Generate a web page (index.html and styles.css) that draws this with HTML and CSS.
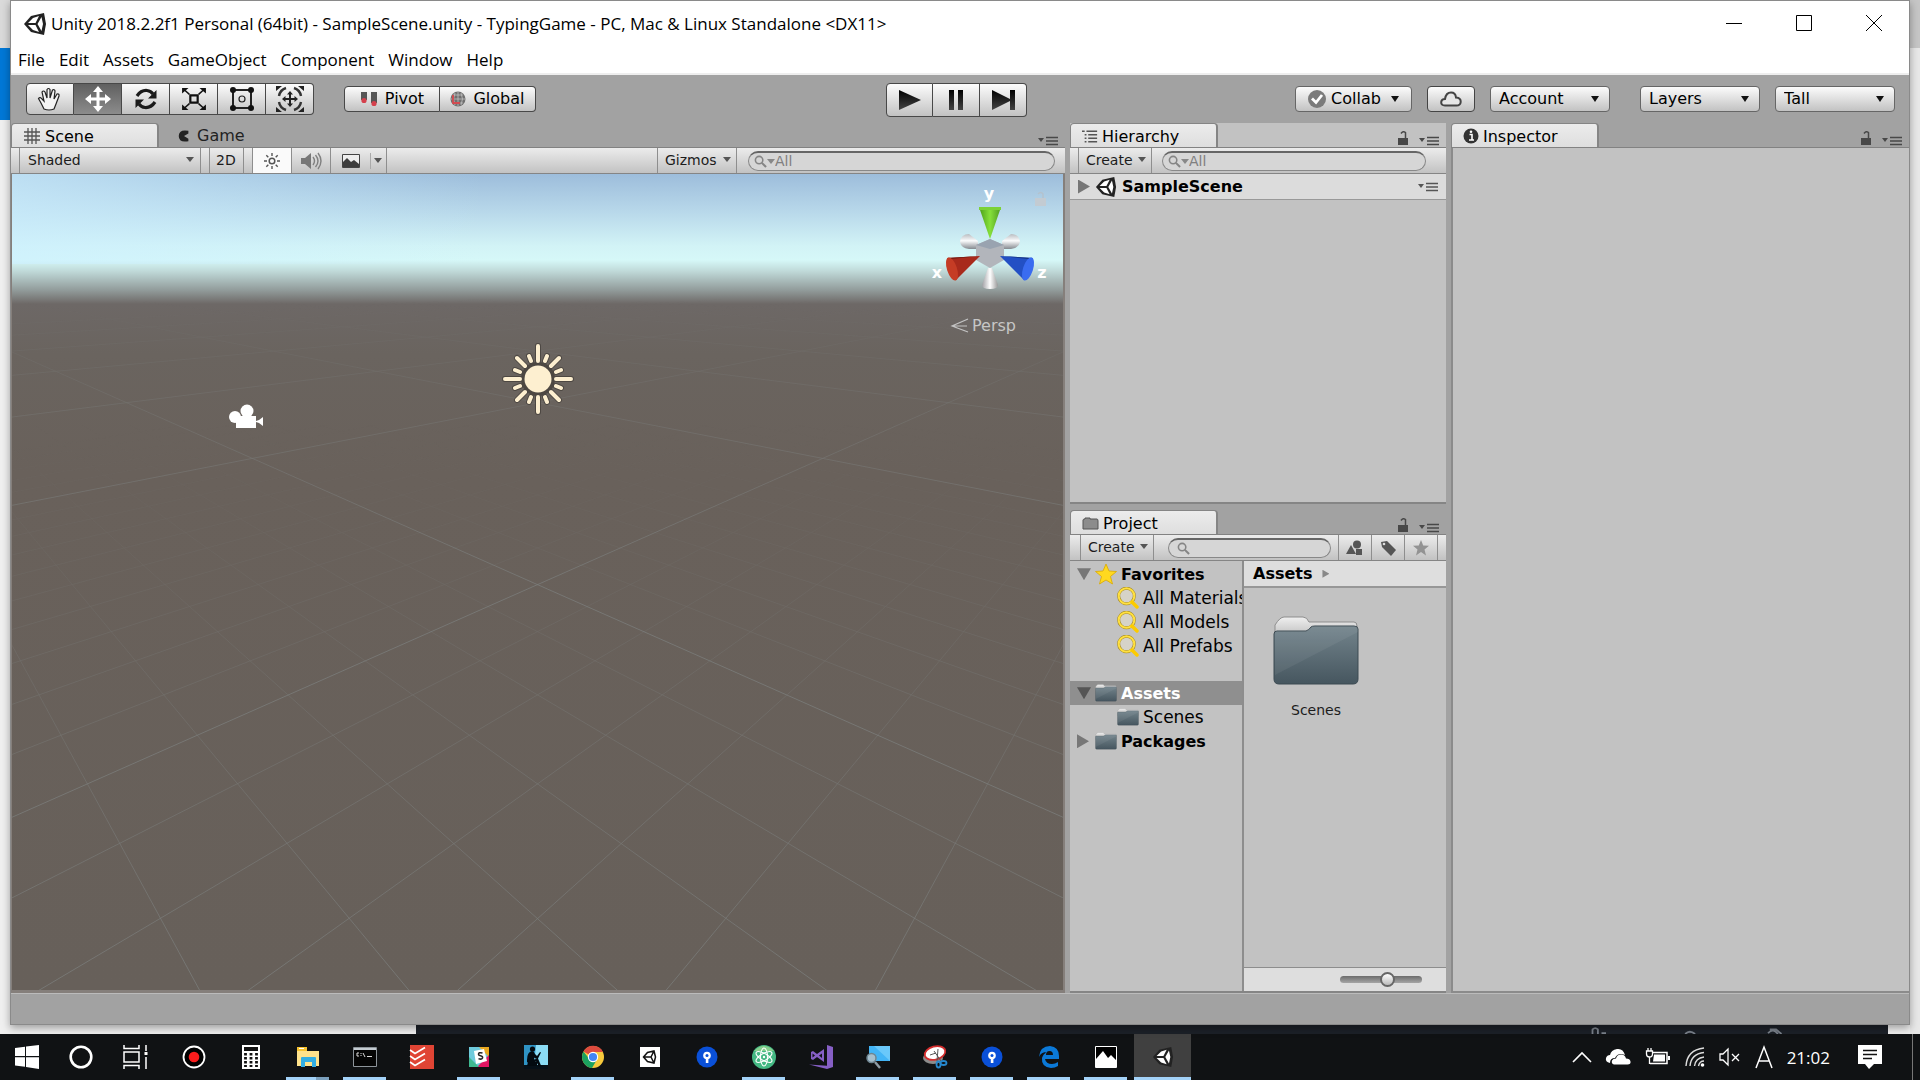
FILE: index.html
```html
<!DOCTYPE html>
<html lang="en">
<head>
<meta charset="utf-8">
<title>Unity 2018.2.2f1 Personal (64bit) - SampleScene.unity - TypingGame</title>
<link rel="stylesheet" href="styles.css">
</head>
<body>
<svg class="defs" width="0" height="0" aria-hidden="true">
  <defs>
    <linearGradient id="folder-front" x1="0" y1="0" x2="0" y2="1"><stop offset="0" stop-color="#73848c"/><stop offset="1" stop-color="#46565f"/></linearGradient>
    <linearGradient id="folder-back" x1="0" y1="0" x2="0" y2="1"><stop offset="0" stop-color="#f0f0f0"/><stop offset="1" stop-color="#a8a8a8"/></linearGradient>
    <linearGradient id="play-fill" x1="0" y1="0" x2="0" y2="1"><stop offset="0" stop-color="#000"/><stop offset="1" stop-color="#444"/></linearGradient>
  </defs>
  <symbol id="i-unity" viewBox="0 0 24 24">
    <path d="M1 12 8 4 21 1 23 12 21 23 8 20Z" fill="#222"/>
    <path d="M5 11 10 6 16 4 12.500 11Z M5 13 12.500 13 16 20 10 18Z M18.500 5 20 12 18.500 19 14.500 12Z" fill="#fff"/>
  </symbol>
  <symbol id="i-lock" viewBox="0 0 12 16"><path d="M1 8h10v7H1z" fill="currentColor"/><path d="M4 3.500Q6 .5 8.500 2.500V8" fill="none" stroke="currentColor" stroke-width="1.500"/></symbol>
  <symbol id="i-menu" viewBox="0 0 20 10"><path d="M0 2h6l-3 4z" fill="currentColor"/><path d="M8 1.500h12M8 5h12M8 8.500h12" stroke="currentColor" stroke-width="1.400"/></symbol>
  <symbol id="i-search" viewBox="0 0 14 14"><circle cx="5.500" cy="5.500" r="4" fill="none" stroke="#858585" stroke-width="1.700"/><path d="m8.500 8.500 4.500 4.500" stroke="#858585" stroke-width="2.200"/></symbol>
  <symbol id="i-find" viewBox="0 0 22 22"><circle cx="9.500" cy="9" r="7.800" fill="#d6d3c8" stroke="#a58a22" stroke-width="3"/><circle cx="9.500" cy="9" r="7.800" fill="none" stroke="#ffe040" stroke-width="2"/><path d="m15 15 5 5" stroke="#fccb00" stroke-width="3.500" stroke-linecap="round"/></symbol>
  <symbol id="i-folder" viewBox="0 0 88 72">
    <path d="M3 20V10Q8 2 12 2H31Q35 2 37 7H82Q85 7 85 11V30H3Z" fill="url(#folder-back)" stroke="#8d8d8d"/>
    <path d="M2 19Q2 16 5 16H34Q37 15 39 12 40 11 43 11H82Q86 11 86 14V64Q86 69 81 69H7Q2 69 2 64Z" fill="url(#folder-front)" stroke="#3c4a52"/>
    <path d="M3 60 86 17V13Q86 11 82 11H43Q40 11 38 13 36 16 33 16H5Q3 16 3 19Z" fill="#fff" opacity=".06"/>
  </symbol>
  <symbol id="i-blue" viewBox="0 0 24 24"><circle cx="12" cy="12" r="10.500" fill="#0a50d8"/><circle cx="12" cy="10.500" r="3.800" fill="#fff"/><path d="M10.800 12h2.600v6h-2.600z" fill="#fff"/><circle cx="12" cy="10.500" r="1.500" fill="#0a50d8"/></symbol>
</svg>

<div class="desktop">
<main class="window">
  <header class="titlebar">
    <svg class="logo" viewBox="0 0 24 24"><use href="#i-unity"/></svg>
    <h1>Unity 2018.2.2f1 Personal (64bit) - SampleScene.unity - TypingGame - PC, Mac &amp; Linux Standalone &lt;DX11&gt;</h1>
    <div class="controls">
      <button aria-label="Minimize"><svg width="16" height="16"><path d="M0 8.500h16" stroke="#000"/></svg></button>
      <button aria-label="Maximize"><svg width="16" height="16"><path d="M.5.5h15v15H.5z" fill="none" stroke="#000"/></svg></button>
      <button aria-label="Close"><svg width="16" height="16"><path d="m0 0 16 16M16 0 0 16" stroke="#000"/></svg></button>
    </div>
  </header>
  <nav class="menubar">
    <button>File</button><button>Edit</button><button>Assets</button><button>GameObject</button><button>Component</button><button>Window</button><button>Help</button>
  </nav>

  <div class="toolbar">
    <div class="tools group">
      <button aria-label="Hand"><svg width="28" height="26" viewBox="0 0 28 26"><path d="M8 23 5 17 2.500 12.500Q4 10.500 6 13L8 15 6 6Q7.500 4 9 6L11 12V3.500Q12.500 1.500 14 3.500V12L16.500 4Q18.500 3 19 5L18 13 21 8Q23.500 7.500 23 10L20 18 18 23Q13 25 8 23Z" fill="#f4f4f4" stroke="#222" stroke-width="1.200"/></svg></button>
      <button class="on" aria-label="Move"><svg width="26" height="26" viewBox="0 0 26 26"><path d="m13 0 5 6h-3.500v5.500H20V8l6 5-6 5v-3.500h-5.500V20H18l-5 6-5-6h3.500v-5.500H6V18l-6-5 6-5v3.500h5.500V6H8z" fill="#fff"/></svg></button>
      <button aria-label="Rotate"><svg width="24" height="24" viewBox="0 0 24 24"><path d="M3 9Q7 3 13 3.500 17 4 19 7M21 15Q17 21 11 20.500 7 20 5 17" fill="none" stroke="#1b1b1b" stroke-width="3.200"/><path d="M22.500 3v8.500H14zM1.500 21v-8.500H10z" fill="#1b1b1b"/></svg></button>
      <button aria-label="Scale"><svg width="26" height="22" viewBox="0 0 26 24"><path d="M9 8h8v8H9z" fill="none" stroke="#111" stroke-width="2.400"/><path d="m8 7-5-4.500M18 7l5-4.500M8 17l-5 4.500M18 17l5 4.500" stroke="#111" stroke-width="1.600"/><path d="M0 0h7L0 6zM26 0h-7l7 6zM0 24h7l-7-6zM26 24h-7l7-6z" fill="#111"/></svg></button>
      <button aria-label="Rect"><svg width="26" height="26" viewBox="0 0 26 26"><path d="M4 4h18v18H4z" fill="none" stroke="#222" stroke-width="2"/><circle cx="13" cy="13" r="3" fill="none" stroke="#222" stroke-width="1.200"/><g fill="#111"><circle cx="4" cy="4" r="3"/><circle cx="22" cy="4" r="3"/><circle cx="4" cy="22" r="3"/><circle cx="22" cy="22" r="3"/></g></svg></button>
      <button aria-label="Transform"><svg width="30" height="28" viewBox="0 0 30 28"><path d="m15 6 3 3.500h-2v3.500h3.500v-2l3.500 3-3.500 3v-2H16v3.500h2L15 22l-3-3.500h2V15h-3.500v2L7 14l3.500-3v2H14V9.500h-2z" fill="#222"/><path d="M4 11Q5 5 11 3M19 3q6 2 7 8M26 17q-1 6-7 8M11 25q-6-2-7-8" fill="none" stroke="#333" stroke-width="2.400"/><path d="M1 1h6L1 6zM29 1h-6l6 5zM1 27h6l-6-5zM29 27h-6l6-5z" fill="#222"/></svg></button>
    </div>
    <div class="group pivots">
      <button><svg width="18" height="16" viewBox="0 0 18 16"><path d="M1 1h6v8H1zM11 1h6v11h-6z" fill="#555"/><circle cx="4" cy="9.500" r="2.600" fill="#d4404c"/><circle cx="14" cy="12.500" r="2.600" fill="#d4404c"/></svg>Pivot</button>
      <button><svg width="16" height="16" viewBox="0 0 16 16"><circle cx="8" cy="8" r="7.500" fill="#707070"/><path d="M8 1v14M1 8h14M3 4h10M3 12h10M5 2Q2 8 5 14M11 2q3 6 0 12" fill="none" stroke="#c0c0c0" stroke-width=".8"/><path d="M3 4v8h7" fill="none" stroke="#d34a50" stroke-width="1.800"/></svg>Global</button>
    </div>
    <div class="group play">
      <button aria-label="Play"><svg width="22" height="20"><path d="M0 0 22 10 0 20z" fill="url(#play-fill)"/></svg></button>
      <button aria-label="Pause"><svg width="14" height="20"><path d="M0 0h5v20H0zM9 0h5v20H9z" fill="url(#play-fill)"/></svg></button>
      <button aria-label="Step"><svg width="23" height="20"><path d="M0 0 18 9V0h5v20h-5v-9L0 20z" fill="url(#play-fill)"/></svg></button>
    </div>
    <div class="right-tools">
      <button class="pill collab"><svg width="18" height="18" viewBox="0 0 18 18"><circle cx="9" cy="9" r="9" fill="#7b7b7b"/><path d="m4 8.500 4 4L14 5" fill="none" stroke="#fff" stroke-width="2.800"/></svg>Collab<i class="caret"></i></button>
      <button class="pill cloud" aria-label="Services"><svg width="22" height="16" viewBox="0 0 22 16"><path d="M5 14.500Q1 14.500 1.200 11 1.500 8 5 8 6 1.500 11 1.500q4.500 0 5 5 5 .5 4.700 4.500-.3 3.500-4.200 3.500Z" fill="#e6e6e6" stroke="#444" stroke-width="2"/></svg></button>
      <div class="drop"><select aria-label="Account"><option>Account</option></select><i class="caret"></i></div>
      <div class="drop wide-gap"><select aria-label="Layers"><option>Layers</option></select><i class="caret"></i></div>
      <div class="drop"><select aria-label="Layout"><option>Tall</option></select><i class="caret"></i></div>
    </div>
  </div>

  <div class="panes">
    <section class="pane">
      <div class="tabs">
        <button class="tab active"><svg width="18" height="16" viewBox="0 0 18 16"><path d="M5 0v16M9 0v16M13 0v16M1 4h16M1 8h16M1 12h16" stroke="#555" stroke-width="1.300"/></svg>Scene</button>
        <button class="tab"><svg width="14" height="14" viewBox="0 0 16 14"><path d="M13 1Q2-1 2 7t11 6V10L8 7l5-3z" fill="#222"/></svg>Game</button>
        <span class="tab-tools"><svg width="20" height="10"><use href="#i-menu"/></svg></span>
      </div>
      <div class="subbar scenebar">
        <div class="cell shade"><select aria-label="Draw mode"><option>Shaded</option></select><i class="caret small"></i></div>
        <button class="cell two-d">2D</button>
        <button class="cell light" aria-label="Lighting"><svg width="16" height="16" viewBox="0 0 16 16"><circle cx="8" cy="8" r="2.800" fill="none" stroke="#555" stroke-width="1.500"/><path d="M8 0v3M8 13v3M0 8h3M13 8h3M2.300 2.300l2 2M11.700 11.700l2 2M2.300 13.700l2-2M11.700 4.300l2-2" stroke="#555" stroke-width="1.400"/></svg></button>
        <button class="cell audio" aria-label="Audio"><svg width="22" height="18" viewBox="0 0 22 18"><path d="M1 6h4l6-5v16l-6-5H1z" fill="#777"/><path d="M13 5q3 4 0 8M15.500 3q5 6 0 12M18 1q6 8 0 16" fill="none" stroke="#808080" stroke-width="1.400"/></svg></button>
        <button class="cell fx" aria-label="Effects"><svg width="18" height="14" viewBox="0 0 18 14"><path d="M.5.500h17v13H.5z" fill="#eee" stroke="#444"/><path d="M1 13V8l4-4 4 4 3-2 5 4v3z" fill="#3d3d3d"/></svg><i class="rule"></i><i class="caret small"></i></button>
        <button class="cell gizmos">Gizmos<i class="caret small"></i></button>
        <label class="search"><svg width="13" height="13"><use href="#i-search"/></svg><i class="caret small grey"></i><input aria-label="Search scene" placeholder="All"></label>
      </div>
      <div class="scene">
        <svg class="grid" viewBox="0 0 1051 817" preserveAspectRatio="xMidYMin slice">
          <defs>
            <linearGradient id="fade-minor" gradientUnits="userSpaceOnUse" x1="0" y1="250" x2="0" y2="800"><stop offset="0" stop-color="#fff" stop-opacity="0"/><stop offset=".3" stop-color="#fff" stop-opacity=".25"/><stop offset="1" stop-color="#fff"/></linearGradient>
            <linearGradient id="fade-major" gradientUnits="userSpaceOnUse" x1="0" y1="125" x2="0" y2="420"><stop offset="0" stop-color="#fff" stop-opacity="0"/><stop offset=".35" stop-color="#fff" stop-opacity=".45"/><stop offset="1" stop-color="#fff"/></linearGradient>
            <mask id="m-minor" maskUnits="userSpaceOnUse" x="0" y="0" width="1051" height="817"><rect width="1051" height="817" fill="url(#fade-minor)"/></mask>
            <mask id="m-major" maskUnits="userSpaceOnUse" x="0" y="0" width="1051" height="817"><rect width="1051" height="817" fill="url(#fade-major)"/></mask>
            <path id="minor" d="M-210 85l435 800M-210 85l664 800M-210 85l892 800M-210 85l1121 800M-210 85l1350 800M-210 85l1579 800M-210 85l2036 800M-210 85l2265 800M-210 85l2494 800M-210 85l2723 800M-210 85l2951 800M-210 85l3180 800M-210 85l3409 800M-210 85l3638 800M-210 85l3867 800M-210 85l4324 800M-210 85l4553 800M-210 85l4782 800M-210 85l5011 800M-210 85l5239 800"/>
            <path id="major" d="M-210 85l1807 800M-210 85l4095 800M-210 85l6383 800M-210 85l8671 800M-210 85l10959 800M-210 85l13247 800M-210 85l15535 800"/>
          </defs>
          <g fill="none" stroke="#7e807f" stroke-opacity=".7">
            <g mask="url(#m-minor)"><use href="#minor"/><use href="#minor" transform="translate(1051) scale(-1 1)"/></g>
            <g mask="url(#m-major)"><use href="#major"/><use href="#major" transform="translate(1051) scale(-1 1)"/></g>
          </g>
          <g transform="translate(526 205)" stroke-linecap="round">
            <g fill="none" stroke="#4a4540" stroke-width="6" opacity=".9">
              <circle r="14" fill="#4a4540"/>
              <path d="M0-18V-33M0 18V33M-18 0H-33M18 0H33M13-13 21-21M-13-13-21-21M13 13 21 21M-13 13-21 21M7-18 9-23M-7-18-9-23M7 18 9 23M-7 18-9 23M18-7 23-9M-18-7-23-9M18 7 23 9M-18 7-23 9"/>
            </g>
            <circle r="13.500" fill="#fdefd0"/>
            <path d="M0-18V-33M0 18V33M-18 0H-33M18 0H33M13-13 21-21M-13-13-21-21M13 13 21 21M-13 13-21 21M7-18 9-23M-7-18-9-23M7 18 9 23M-7 18-9 23M18-7 23-9M-18-7-23-9M18 7 23 9M-18 7-23 9" stroke="#fdefd0" stroke-width="4"/>
          </g>
          <g fill="#fff">
            <path d="M224 242h20v12h-20zM244 247l3-1 4-3v9l-4-3-3-1z"/><circle cx="223" cy="243" r="6"/><circle cx="235" cy="237" r="6.500"/>
          </g>
        </svg>
        <svg class="axes" width="136" height="170" viewBox="924 173 136 170">
          <defs>
            <linearGradient id="ax-y"><stop offset="0" stop-color="#4a9e18"/><stop offset=".5" stop-color="#86e03a"/><stop offset="1" stop-color="#4f9a20"/></linearGradient>
            <linearGradient id="ax-w"><stop offset="0" stop-color="#a0a0a4"/><stop offset=".5" stop-color="#fff"/><stop offset="1" stop-color="#999"/></linearGradient>
            <linearGradient id="ax-side" x1="0" y1="0" x2="0" y2="1"><stop offset="0" stop-color="#b8bcc0"/><stop offset=".45" stop-color="#fbfcfd"/><stop offset="1" stop-color="#85898f"/></linearGradient>
          </defs>
          <path d="M959 241q1-8 9-8l9 7v8h-9q-8-1-9-7z" fill="url(#ax-side)"/>
          <path d="M1019 241q-1-8-9-8l-9 7v8h9q8-1 9-7z" fill="url(#ax-side)"/>
          <path d="m989 238 14 6v15l-14 8-14-8v-15z" fill="#b2b5bb"/><path d="m989 238 14 6-14 4-14-4z" fill="#99a3b0"/>
          <path d="M978 206h22l-11 32z" fill="url(#ax-y)"/><path d="M978 206h22v3h-22z" fill="#7cd236"/>
          <path d="M946 257l33-2-24 24z" fill="#a82a1c"/><path d="m950 258 29-3-33 2z" fill="#701a12"/><ellipse cx="951" cy="268" rx="5" ry="12" transform="rotate(-18 951 268)" fill="#c53c25"/>
          <path d="M1032 257l-33-2 24 24z" fill="#2350c4"/><path d="m1028 258-29-3 33 2z" fill="#15307c"/><ellipse cx="1027" cy="268" rx="5" ry="12" transform="rotate(18 1027 268)" fill="#3a6cf0"/>
          <path d="M987 267h4l6 17q0 4-8 4t-8-4z" fill="url(#ax-w)"/>
          <g class="axis-label"><text x="988" y="198">y</text><text x="936" y="277">x</text><text x="1041" y="277">z</text></g>
          <text x="971" y="330" class="persp">Persp</text>
          <path d="m967 318-16 7 16 6M951 325h15" fill="none" stroke="#c4c4c4" stroke-width="1.200"/>
          <path d="M1034 197h11v8h-11z" fill="#c3cbd2"/><path d="M1037 193q3-3 5 0v4" fill="none" stroke="#b4c2ce" stroke-width="1.500"/>
        </svg>
      </div>
    </section>

    <div class="middle">
      <section class="pane hierarchy">
        <div class="tabs">
          <button class="tab active"><svg width="16" height="13" viewBox="0 0 18 14"><path d="M0 1h3M5 1h12M3 5h2M7 5h10M3 9h2M7 9h10M3 13h2M7 13h10" stroke="#555" stroke-width="1.600"/></svg>Hierarchy</button>
          <span class="tab-tools"><svg width="12" height="16"><use href="#i-lock"/></svg><svg width="20" height="10"><use href="#i-menu"/></svg></span>
        </div>
        <div class="subbar">
          <button class="cell create">Create<i class="caret small"></i></button>
          <label class="search"><svg width="13" height="13"><use href="#i-search"/></svg><i class="caret small grey"></i><input aria-label="Search hierarchy" placeholder="All"></label>
        </div>
        <div class="scene-row"><i class="tri"></i><svg width="22" height="22"><use href="#i-unity"/></svg><b>SampleScene</b><svg class="row-menu" width="20" height="10"><use href="#i-menu"/></svg></div>
      </section>
      <section class="pane project">
        <div class="tabs">
          <button class="tab active"><svg width="17" height="14" viewBox="0 0 17 14"><path d="M1 4Q1 3 3 3V2h5v1h7q1 0 1 2v8H1z" fill="#8c8c8c" stroke="#555"/></svg>Project</button>
          <span class="tab-tools"><svg width="12" height="16"><use href="#i-lock"/></svg><svg width="20" height="10"><use href="#i-menu"/></svg></span>
        </div>
        <div class="subbar">
          <button class="cell create">Create<i class="caret small"></i></button>
          <label class="search"><svg width="13" height="13"><use href="#i-search"/></svg><input aria-label="Search project"></label>
          <button class="cell icon" aria-label="Search by type"><svg width="18" height="16" viewBox="0 0 18 16"><circle cx="11" cy="4.500" r="4" fill="#555"/><path d="m0 14 5-9 5 9zM10 9h6v6h-6z" fill="#555"/></svg></button>
          <button class="cell icon" aria-label="Search by label"><svg width="17" height="16" viewBox="0 0 17 16"><path d="M1 2 7 1l9 9-5 6-9-9z" fill="#555"/><circle cx="4" cy="4" r="1.300" fill="#ddd"/></svg></button>
          <button class="cell icon star" aria-label="Save search"><svg width="16" height="16" viewBox="0 0 16 16"><path d="m8 0 2.200 5.500 5.800.3-4.500 3.700L13 15.500 8 12l-5 3.500 1.500-6L0 5.800l5.800-.3z" fill="#939393"/></svg></button>
        </div>
        <div class="split">
          <div class="tree">
            <div class="row bold"><i class="tri down"></i><svg width="22" height="22" viewBox="0 0 22 22"><path d="m11 1 3 7 7.500.5-6 5 2 7.500-6.500-4-6.500 4 2-7.500-6-5L8 8z" fill="#ffd91f" stroke="#d9a800" stroke-width=".8"/></svg>Favorites</div>
            <div class="row child"><svg width="22" height="22"><use href="#i-find"/></svg>All Materials</div>
            <div class="row child"><svg width="22" height="22"><use href="#i-find"/></svg>All Models</div>
            <div class="row child"><svg width="22" height="22"><use href="#i-find"/></svg>All Prefabs</div>
            <div class="row bold selected"><i class="tri down"></i><svg width="22" height="18"><use href="#i-folder"/></svg>Assets</div>
            <div class="row child"><svg width="22" height="18"><use href="#i-folder"/></svg>Scenes</div>
            <div class="row bold"><i class="tri"></i><svg width="22" height="18"><use href="#i-folder"/></svg>Packages</div>
          </div>
          <div class="browser">
            <div class="crumb">Assets<i class="tri tiny"></i></div>
            <div class="files"><figure><svg width="88" height="72"><use href="#i-folder"/></svg><figcaption>Scenes</figcaption></figure></div>
            <div class="sizer"><input type="range" min="0" max="100" value="60" aria-label="Icon size"></div>
          </div>
        </div>
      </section>
    </div>

    <section class="pane inspector">
      <div class="tabs">
        <button class="tab active"><svg width="16" height="16" viewBox="0 0 16 16"><circle cx="8" cy="8" r="7.500" fill="#333"/><path d="M6.500 6.500h2.500V12M6 12h5" stroke="#fff" stroke-width="1.600" fill="none"/><circle cx="8" cy="3.800" r="1.300" fill="#fff"/></svg>Inspector</button>
        <span class="tab-tools"><svg width="12" height="16"><use href="#i-lock"/></svg><svg width="20" height="10"><use href="#i-menu"/></svg></span>
      </div>
      <div class="empty"></div>
    </section>
  </div>
  <footer class="status"></footer>
</main>
<div class="behind"><svg width="230" height="9" viewBox="0 0 230 10"><path d="M10 10V5q3-3 6 0v5M20 9h5M113 10q5-5 11 0M205 9q6-6 11 1M207 5h7l6 5" fill="none" stroke="#7b828c" stroke-width="2"/></svg></div>
</div>

<footer class="taskbar">
  <button class="sys" aria-label="Start"><svg width="24" height="24" viewBox="0 0 24 24"><path d="M0 3l10-1.200V11H0zM11 1.600 24 0v11H11zM0 12.200h10v9.600L0 20.500zM11 12.200h13V24l-13-2z" fill="#fff"/></svg></button>
  <button class="sys" aria-label="Search"><svg width="24" height="24"><circle cx="12" cy="12" r="10.300" fill="none" stroke="#fff" stroke-width="2.600"/></svg></button>
  <button class="sys" aria-label="Task view"><svg width="25" height="24" viewBox="0 0 25 24"><path d="M1 0v3.500h15V0M1 24v-3.500h15V24M1 7h15v10H1zM23 0v6M23 12v12" fill="none" stroke="#fff" stroke-width="1.500"/><path d="M21.500 7h3v3h-3z" fill="#fff"/></svg></button>
  <div class="apps">
  <button aria-label="Recorder"><svg width="24" height="24"><circle cx="12" cy="12" r="10.500" fill="#000" stroke="#fff" stroke-width="1.800"/><circle cx="12" cy="12" r="5.300" fill="#fa1c1c"/></svg></button>
  <button aria-label="Calculator"><svg width="18" height="24" viewBox="0 0 18 24"><path d="M0 0h18v24H0z" fill="#fff"/><path d="M2 2h14v4H2z" fill="#111"/><path d="M3.500 8v14M9 8v14M14.500 8v14" stroke="#111" stroke-width="2.800" stroke-dasharray="2.500 1.500"/></svg></button>
  <button class="open multi" aria-label="File Explorer"><svg width="24" height="22" viewBox="0 0 24 22"><path d="M1 1h10v4h12v15H1z" fill="#ffe28b"/><path d="M1 1h10v4H1z" fill="#f6c331"/><path d="M3 2.500h5" stroke="#fff"/><path d="M5 21v-9q0-1 1-1h13q1 0 1 1v9h-4v-5h-7v5z" fill="#33aee2"/></svg></button>
  <button class="open" aria-label="Command Prompt"><svg width="24" height="20" viewBox="0 0 24 20"><path d="M.5.500h23v19H.5z" fill="#050505" stroke="#8d949a"/><path d="M1 1h22v2H1z" fill="#c4ccd2"/><path d="M6 6H4v3h2M8 6v1M8 8v1M10 6l2 4M14 9.500h5" stroke="#ddd" fill="none"/></svg></button>
  <button aria-label="Todoist"><svg width="24" height="24"><path d="M0 0h24v24H0z" fill="#e04434"/><path d="m0 5 5 3.500 10-6M0 11l5 3.500 10-6M0 17l5 3.500 10-6" fill="none" stroke="#fff" stroke-width="1.700"/></svg></button>
  <button class="open" aria-label="Slack"><svg width="20" height="20" viewBox="0 0 20 20"><path d="M0 0h20v20H0z" fill="#6ecadc"/><path d="M10 0h10v10z" fill="#e9a820"/><path d="M20 8v12H8z" fill="#e01563"/><path d="M0 10v10h10z" fill="#3eb991"/><path d="m5 4 10-2 3 12-11 3z" fill="#fff"/><path d="M13.500 6q-4-1-4 1.200 0 1.300 2 1.600 2.500.5 2 2.200-1 2-4 .6" stroke="#222" stroke-width="1.600" fill="none"/></svg></button>
  <button aria-label="Kindle"><svg width="24" height="24" viewBox="0 0 24 24"><path d="M0 0h24v24H0z" fill="#2f93c4"/><path d="M12 0h12v20H10z" fill="#8bdcf5"/><path d="M0 20h24v4H0z" fill="#061018"/><circle cx="8.500" cy="4" r="2.600" fill="#030a10"/><path d="M3 15q0-8 5-9 2 0 3 3l2 2 3-4 1 .5-3 6q-2 1-4-1v2l4-1 3 7 2 1h-4l-3-5-3 2q-4 1-6-1.500zM4 17h9v4H3z" fill="#030a10"/></svg></button>
  <button class="open" aria-label="Chrome"><svg width="24" height="24" viewBox="0 0 24 24"><circle cx="12" cy="12" r="11" fill="#f7c93c"/><path d="M12 12 2.500 6.500A11 11 0 0 1 22 7H12z" fill="#dd4b3e"/><path d="M2.500 6.500A11 11 0 0 0 11 23l5-8.500-8-1z" fill="#1ba15f"/><circle cx="12" cy="12" r="5.200" fill="#fff"/><circle cx="12" cy="12" r="4.100" fill="#4285f4"/></svg></button>
  <button aria-label="Unity Hub"><svg width="20" height="20" viewBox="0 0 20 20"><path d="M0 0h20v20H0z" fill="#fff"/><path d="m3.500 10 4-4.500L14 4l1.500 6-1.500 6-6.500-1.500zM4 10h7M14 4l-3 6 3 6" fill="none" stroke="#111" stroke-width="1.500"/></svg></button>
  <button aria-label="Sourcetree"><svg width="24" height="24"><use href="#i-blue"/></svg></button>
  <button class="open" aria-label="Atom"><svg width="24" height="24" viewBox="0 0 24 24"><circle cx="12" cy="12" r="12" fill="#44b883"/><path d="M2 6Q12-4 22 6z" fill="#86cf8d"/><g fill="none" stroke="#fff" stroke-width="1.100"><ellipse cx="12" cy="12" rx="3.500" ry="9"/><ellipse cx="12" cy="12" rx="3.500" ry="9" transform="rotate(60 12 12)"/><ellipse cx="12" cy="12" rx="3.500" ry="9" transform="rotate(120 12 12)"/></g><circle cx="12" cy="12" r="1.200" fill="#fff"/></svg></button>
  <button aria-label="Visual Studio"><svg width="24" height="24" viewBox="0 0 24 24"><path d="m18 0 6 2v20l-6 2L0 19.500l18 1.300z" fill="#865fc5"/><path d="M15 4v13L8 12l-4 3-2-1V7l2-1 4 3zM3.500 8.500v4L6 10.500zM13 8.500l-3 2 3 2.500z" fill="#865fc5" fill-rule="evenodd"/></svg></button>
  <button class="open" aria-label="Remote Desktop"><svg width="24" height="24" viewBox="0 0 24 24"><path d="M3 1h21v15H3z" fill="#42b4f6"/><path d="m8 1 16 15V1z" fill="#6ac8fa"/><circle cx="5.500" cy="13" r="4.500" fill="#a7bfcd" stroke="#6e8591" stroke-width="1.500"/><path d="m9 17 5 6" stroke="#8d9ba5" stroke-width="2.500"/></svg></button>
  <button class="open" aria-label="Snipping Tool"><svg width="24" height="24" viewBox="0 0 24 24"><ellipse cx="10" cy="13" rx="10" ry="6" fill="#8c8c8c"/><ellipse cx="12" cy="8" rx="10.500" ry="6.500" transform="rotate(-15 12 8)" fill="#fff" stroke="#d22d2d" stroke-width="1.800"/><path d="m11 6 7 10M15 4l-1 12M7 10l6-2" stroke="#555"/><g fill="none" stroke="#2688cf" stroke-width="1.800"><ellipse cx="15.500" cy="19.500" rx="2" ry="3"/><ellipse cx="20.500" cy="18" rx="3" ry="2"/></g></svg></button>
  <button class="open" aria-label="Sourcetree"><svg width="24" height="24"><use href="#i-blue"/></svg></button>
  <button class="open" aria-label="Edge"><svg width="22" height="22" viewBox="0 0 22 22"><path d="M1 11Q2 0 12 0q9 1 9 10v3H7q1 5 7 5 3 0 6-2v4q-3 2-7 2-10-1-9-10 1-4 5-6-6 0-8 5zM8 9h7q0-4-3.500-4T8 9z" fill="#0b79d8" fill-rule="evenodd"/></svg></button>
  <button class="open" aria-label="Photos"><svg width="22" height="22" viewBox="0 0 22 22"><path d="M.5.500h21v21H.5z" fill="#000" stroke="#fff"/><path d="M1 21v-8l7-8 5 7 3-3 6 6v6z" fill="#fff"/></svg></button>
  <button class="open current" aria-label="Unity"><svg width="22" height="24"><use href="#i-unity"/></svg></button>
  </div>
  <div class="tray">
    <svg width="18" height="10"><path d="m0 10 9-9 9 9" fill="none" stroke="#fff" stroke-width="1.600"/></svg>
    <svg width="26" height="16" viewBox="0 0 26 16"><path d="M5 14Q0 13 1 9q1-3 4-3 1-5 7-6 6-1 8 6-7-3-10 3-5 0-5 5z" fill="#fff"/><path d="M9 15.500q-3-1-2-4 1-2 4-2 1-4 5-4t5 4q4 0 4.500 3t-3 3z" fill="#fff"/></svg>
    <svg width="26" height="18" viewBox="0 0 26 18"><path d="M8 4.500h14v11H5" fill="none" stroke="#fff" stroke-width="1.500"/><path d="M9 6.500h11v7H8zM23 8h2v4h-2z" fill="#fff"/><path d="M1.500 3v3q0 3 3 3t3-3V3zM3 0v3M6 0v3M4.500 9v7" fill="none" stroke="#fff" stroke-width="1.300"/></svg>
    <svg width="20" height="20" viewBox="0 0 20 20"><g fill="none" stroke="#ddd" stroke-width="1.400"><path d="M1 19Q2 3 19 1M5 19Q6 7 19 5.500M9.500 19q1-8 9.500-9M13.500 19q1-5 5.500-5"/></g><circle cx="17.500" cy="18" r="1.800" fill="#fff"/></svg>
    <svg width="22" height="18" viewBox="0 0 22 18"><path d="M1 6h3l5-5v16l-5-5H1zM13 6l7 7M20 6l-7 7" fill="none" stroke="#fff" stroke-width="1.300"/></svg>
    <svg width="18" height="22" viewBox="0 0 18 22"><path d="M1 22 9 1l8 21M4 15h10" fill="none" stroke="#fff" stroke-width="1.500"/></svg>
    <time>21:02</time>
    <svg class="note" width="24" height="24" viewBox="0 0 24 24"><path d="M0 0h24v19h-8l-5 5-4-5H0z" fill="#fff"/><path d="M5 5.500h14M5 9.500h14M5 13.500h9" stroke="#111" stroke-width="1.300"/></svg>
  </div>
</footer>
</body>
</html>
```
FILE: styles.css
```css
* { box-sizing: border-box; }
body {
  margin: 0;
  height: 100vh;
  display: flex;
  flex-direction: column;
  overflow: hidden;
  font-family: "DejaVu Sans", Verdana, sans-serif;
  font-size: 16px;
  color: #000;
  background: #101214;
}
button, select, input { font: inherit; color: inherit; margin: 0; padding: 0; border: 0; background: none; border-radius: 0; }
select { appearance: none; }
svg { display: block; flex: none; overflow: visible; }
.defs { position: absolute; }

.desktop {
  flex: 1;
  min-height: 0;
  display: flex;
  flex-direction: column;
  padding: 0 10px 0 10px;
  background:
    linear-gradient(#dadada 48px, #0078d7 48px 120px, transparent 120px) left / 10px 100% no-repeat,
    linear-gradient(#c6c6c6 48px, #e8e8e8 48px) right / 10px 100% no-repeat,
    #f0f0f0;
}
.window {
  flex: 1;
  min-height: 0;
  display: flex;
  flex-direction: column;
  border: 1px solid #8a8a8a;
  background: #a2a2a2;
  box-shadow: 0 3px 8px rgba(0, 0, 0, .35);
  position: relative;
}
.behind { height: 9px; margin: 0 22px 0 406px; background: #1c2128; display: flex; justify-content: flex-end; padding-right: 86px; overflow: hidden; }

/* title and menu */
.titlebar { height: 45px; display: flex; align-items: center; background: #fff; padding-left: 12px; }
.titlebar .logo { width: 24px; height: 24px; margin-right: 4px; }
.titlebar h1 { flex: 1; margin: 0; font: 400 17px "Open Sans", "Noto Sans", sans-serif; white-space: nowrap; }
.controls { display: flex; height: 100%; }
.controls button { width: 70px; display: grid; place-items: center; padding-bottom: 2px; }
.menubar { height: 29px; display: flex; gap: 14px; align-items: center; padding: 0 7px; background: #fff; border-bottom: 2px solid #eee; font: 17px "Open Sans", "Noto Sans", sans-serif; }

/* main toolbar */
.toolbar { height: 48px; display: grid; grid-template-columns: 1fr auto 1fr; grid-template-areas: "l p r"; align-items: center; padding: 0 14px 1px 15px; }
.toolbar > .tools, .toolbar > .pivots { grid-area: l; }
.pivots { margin-left: 318px; }
.group { display: flex; width: max-content; }
.group button, .pill, .drop {
  display: flex; align-items: center; justify-content: center;
  height: 26px; gap: 7px; border: 1px solid #484848;
  background: linear-gradient(#fcfcfc, #c2c2c2);
}
.group button + button { border-left: 0; }
.group button:first-child { border-radius: 4px 0 0 4px; }
.group button:last-child { border-radius: 0 4px 4px 0; }
.tools button { width: 48px; height: 32px; }
.group button.on { background: linear-gradient(#606060, #8c8c8c); }
.pivots button { width: 96px; }
.play { grid-area: p; margin: 2px 8px 0 0; }
.play button { width: 47px; height: 34px; }
.right-tools { grid-area: r; display: flex; justify-content: flex-end; gap: 15px; }
.pill, .drop { border-radius: 4px; border-color: #666; }
.collab { width: 117px; gap: 5px; }
.collab .caret { margin-left: 5px; }
.cloud { width: 48px; border-color: #444; }
.drop { width: 120px; padding: 0 10px 0 8px; justify-content: space-between; }
.drop select { flex: 1; }
.wide-gap { margin-left: 15px; }
.caret { flex: none; width: 0; height: 0; border: solid transparent; border-width: 6px 4px 0; border-top-color: #111; pointer-events: none; }
.caret.small { border-width: 5px 4px 0; border-top-color: #555; }
.caret.grey { border-top-color: #888; }

/* docked panes */
.panes { flex: 1; min-height: 0; display: grid; grid-template-columns: 1054fr 376fr 458fr; gap: 5px; }
.pane { min-width: 0; min-height: 0; display: flex; flex-direction: column; }
.tabs { height: 25px; flex: none; display: flex; border-bottom: 1px solid #828282; }
.tab { width: 148px; display: flex; align-items: center; gap: 4px; padding: 1px 0 0 11px; border-radius: 4px 4px 0 0; white-space: nowrap; color: #222; }
.tab.active { color: #000; background: linear-gradient(#ececec, #dedede); border: 1px solid #858585; border-width: 1px 2px 0 1px; }
.tab + .tab { padding-left: 18px; gap: 6px; }
.tab-tools { margin-left: auto; display: flex; align-items: flex-end; gap: 10px; padding: 0 7px 1px; color: #484848; }
.subbar { height: 26px; flex: none; display: flex; align-items: stretch; font-size: 14px; padding-left: 8px; color: #1c1c1c; background: linear-gradient(#ececec, #c2c2c2); border-bottom: 1px solid #858585; }
.cell { display: flex; align-items: center; justify-content: space-between; padding: 0 6px 2px; border: solid #8e8e8e; border-width: 0 1px; }
.cell + .cell { margin-left: -1px; }
.cell.shade { width: 182px; padding-left: 8px; }
.shade select { flex: 1; }
.subbar .two-d { margin-left: 8px; width: 35px; }
.subbar .light { margin-left: 8px; width: 40px; background: #fafafa; justify-content: center; padding-bottom: 0; }
.audio { width: 40px; justify-content: center; padding-bottom: 0; }
.fx { width: 57px; padding: 0 4px 0 11px; }
.rule { width: 1px; height: 16px; margin-left: 6px; background: #aaa; }
.subbar .gizmos { margin-left: auto; width: 80px; padding: 0 5px 2px 7px; }
.scenebar .search { flex: 0 0 307px; margin: 3px 10px 2px 11px; }
.search { flex: 1; min-width: 0; display: flex; align-items: center; margin: 3px 20px 2px 10px; padding-left: 5px; border: 1px solid #888; border-top: 2px solid #666; border-radius: 11px; background: #d6d6d6; }
.search input { flex: 1; min-width: 0; outline: 0; padding-bottom: 2px; }
.search input::placeholder { color: #808080; opacity: 1; }
.create { width: 74px; padding: 0 5px 2px 7px; }

/* scene view */
.scene {
  flex: 1; min-height: 0; position: relative; overflow: hidden;
  border: solid #857f7b; border-width: 0 2px 3px 1px;
  background:
    linear-gradient(to right, rgba(205, 240, 255, .65), transparent 45%) top / 100% 90px no-repeat,
    linear-gradient(#9dbddb, #b6d6e9 35px, #d2f3f6 72px, #d6f8f8 86px, #c0dad9 97px, #929c9b 116px, #6d6866 130px, #6a645f 180px, #69615b 300px, #67605a);
}
.grid { width: 100%; height: 100%; }
.axes { position: absolute; top: 0; right: 2px; }
.axis-label { font-weight: 700; font-size: 16px; fill: #fff; text-anchor: middle; }
.persp { font-size: 16px; fill: #c6c6c6; }

/* hierarchy and project */
.middle { display: flex; flex-direction: column; gap: 6px; min-width: 0; min-height: 0; }
.hierarchy { flex: 380; background: #c2c2c2; border-bottom: 2px solid #858585; }
.project { flex: 484; }
.scene-row { height: 26px; display: flex; align-items: center; gap: 5px; padding: 0 8px; background: #dcdcdc; border-bottom: 1px solid #999; }
.row-menu { margin-left: auto; color: #555; }
.tri { flex: none; width: 12px; height: 14px; background: #777; clip-path: polygon(0 0, 100% 50%, 0 100%); }
.tri.down { width: 14px; height: 12px; clip-path: polygon(0 0, 100% 0, 50% 100%); }
.tri.tiny { width: 7px; height: 8px; background: #888; margin-left: 10px; }

.project .subbar { padding-left: 10px; }
.project .search { margin: 3px 7px 2px 14px; padding-left: 8px; }
.icon { width: 34px; padding: 0; justify-content: center; }
.star { margin-right: 8px; }
.split { flex: 1; min-height: 0; display: grid; grid-template-columns: 174fr 202fr; background: #c2c2c2; border-bottom: 2px solid #858585; }
.tree { border-right: 2px solid #8d8d8d; overflow: hidden; padding-top: 1px; }
.row { height: 24px; display: flex; align-items: center; gap: 4px; padding-left: 7px; white-space: nowrap; font-size: 17px; }
.row.bold { font-weight: 700; font-size: 16px; }
.row.child { padding-left: 47px; }
.row .tri:not(.down) { margin-right: 2px; }
.row.selected { margin-top: 23px; background: #8f8f8f; color: #fff; }
.row.selected .tri { background: #555; }
.browser { display: flex; flex-direction: column; min-width: 0; }
.crumb { height: 27px; display: flex; align-items: center; padding-left: 9px; font-weight: 700; background: #dedede; border-bottom: 2px solid #979797; }
.files { flex: 1; padding: 27px 28px; }
figure { margin: 0; width: 88px; display: flex; flex-direction: column; align-items: center; }
figcaption { margin-top: 15px; font-size: 14px; color: #1c1c1c; }
.sizer { height: 24px; display: flex; align-items: center; justify-content: flex-end; padding-right: 24px; background: #dedede; border-top: 1px solid #8d8d8d; }
.sizer input { appearance: none; width: 82px; height: 7px; border-radius: 4px; background: linear-gradient(#6c6c6c, #a5a5a5); }
.sizer input::-webkit-slider-thumb { appearance: none; width: 15px; height: 15px; border-radius: 50%; border: 2px solid #666; background: linear-gradient(#fff, #bbb); }
.empty { flex: 1; background: #c2c2c2; border: solid #8b8b8b; border-width: 0 0 2px 2px; }
.status { height: 31px; flex: none; border-top: 1px solid #bbb; }

/* taskbar */
.taskbar { height: 46px; flex: none; display: flex; background: #101214; color: #fff; }
.taskbar button { display: grid; place-items: center; border-bottom: 3px solid transparent; padding-top: 3px; }
.sys { width: 54px; }
.apps { display: flex; margin-left: 3px; }
.apps button { width: 57px; background: linear-gradient(#a3d2f8, #a3d2f8) center bottom / 0 3px no-repeat border-box; }
.apps .open { background-size: 43px 3px; }
.apps .multi { background-image: linear-gradient(to right, #a3d2f8 70%, #7ba0bd 70%); }
.apps .current { background: linear-gradient(#a3d2f8, #a3d2f8) center bottom / 100% 3px no-repeat border-box, #404040; }
.tray { margin-left: auto; display: flex; align-items: center; gap: 14px; padding-right: 30px; margin-right: 7px; border-right: 1px solid #777; font: 17px "Open Sans", "Noto Sans", sans-serif; }
.tray .note { margin-left: 14px; }
```
